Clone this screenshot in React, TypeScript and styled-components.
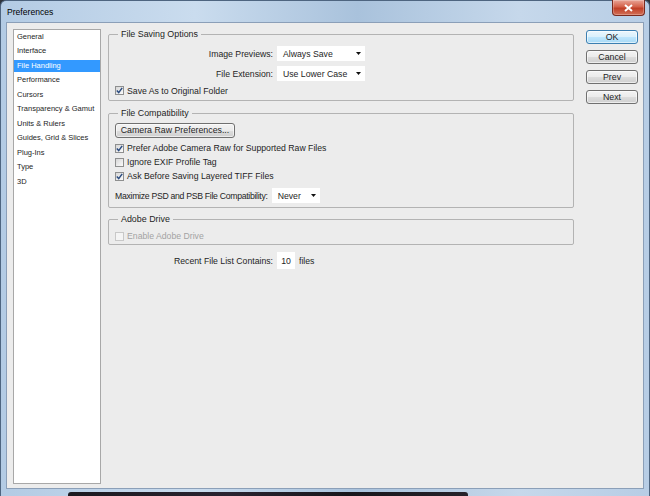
import React from "react";
import styled, { createGlobalStyle, css } from "styled-components";

const UI_FONT = `"Liberation Sans", Arial, sans-serif`;

const GlobalStyle = createGlobalStyle`
  * { box-sizing: border-box; }
  html, body { margin: 0; padding: 0; background: #2f343b; }
  body {
    font-family: ${UI_FONT};
    font-size: 8.7px;
    color: #1e1e1e;
  }
  #root { width: 650px; height: 496px; overflow: hidden; }
`;

const categories = [
  "General",
  "Interface",
  "File Handling",
  "Performance",
  "Cursors",
  "Transparency & Gamut",
  "Units & Rulers",
  "Guides, Grid & Slices",
  "Plug-Ins",
  "Type",
  "3D",
];

const Window = styled.div`
  width: 650px;
  height: 496px;
  display: flex;
  flex-direction: column;
  border: 1px solid #4e6580;
  border-bottom: none;
  border-radius: 6px 6px 0 0;
  background: linear-gradient(
    90deg,
    #b3cbe4 0%,
    #cadcee 30%,
    #a9c2dc 55%,
    #c6d8eb 80%,
    #b7cde5 100%
  );
`;

const TitleBar = styled.div`
  height: 21px;
  flex-shrink: 0;
  display: flex;
  align-items: flex-start;
  justify-content: space-between;
  padding-left: 6px;
`;

const Title = styled.span`
  align-self: center;
  font-size: 8.6px;
  color: #000;
`;

const CloseButton = styled.div`
  width: 33px;
  height: 16px;
  margin-top: -1px;
  margin-right: 4px;
  display: flex;
  align-items: center;
  justify-content: center;
  border: 1px solid #7a2a1e;
  border-top: none;
  border-radius: 0 0 4px 4px;
  background: linear-gradient(#e9a597 0%, #d4614a 45%, #c03f27 55%, #d27057 100%);
  box-shadow: inset 0 0 0 1px rgba(255, 255, 255, 0.25);
`;

const Client = styled.div`
  flex: 1;
  display: flex;
  margin: 0 5px 3px 5px;
  padding: 6px 5px 4px 6px;
  border: 1px solid #8b9fb8;
  background: #ececec;
`;

const BottomShade = styled.div`
  height: 4px;
  width: 400px;
  margin-left: 67px;
  flex-shrink: 0;
  border-radius: 3px 3px 0 0;
  background: linear-gradient(90deg, #1c1a20, #2a2330 40%, #18161b 70%, #26222a);
`;

const CategoryList = styled.ul`
  width: 88px;
  margin: 0;
  padding: 0.5px 0 0;
  list-style: none;
  background: #fff;
  border: 1px solid #a8a8a8;
`;

const CategoryItem = styled.li<{ $selected?: boolean }>`
  height: 12.5px;
  line-height: 12.5px;
  margin-bottom: 2px;
  padding-left: 3px;
  font-size: 7.5px;
  white-space: nowrap;
  color: #1e1e1e;
  ${(p) =>
    p.$selected &&
    css`
      background: #3399ff;
      color: #fff;
    `}
`;

const Main = styled.div`
  flex: 1;
  margin-left: 7px;
  display: flex;
  flex-direction: column;
`;

const Group = styled.fieldset<{ $top?: number; $pt?: number; $pb?: number }>`
  margin: ${(p) => p.$top ?? 0}px 0 0;
  padding: ${(p) => p.$pt ?? 4}px 6px ${(p) => p.$pb ?? 4}px;
  min-inline-size: auto;
  border: 1px solid #b3b3b3;
  border-radius: 2px;
  display: flex;
  flex-direction: column;
`;

const Legend = styled.legend`
  margin-left: 3px;
  padding: 0 3px;
  line-height: 11px;
  font-size: 8.9px;
  color: #1e1e1e;
`;

const FieldRow = styled.div<{ $top?: number; $height?: number }>`
  display: flex;
  align-items: center;
  height: ${(p) => p.$height ?? 15}px;
  margin-top: ${(p) => p.$top ?? 0}px;
  white-space: nowrap;
`;

const FieldLabel = styled.span<{ $width?: number; $tight?: boolean }>`
  width: ${(p) => (p.$width ? `${p.$width}px` : "auto")};
  text-align: right;
  margin-right: 4px;
  letter-spacing: ${(p) => (p.$tight ? "-0.3px" : "normal")};
`;

const SelectBox = styled.div<{ $width: number }>`
  width: ${(p) => p.$width}px;
  height: 15px;
  display: flex;
  align-items: center;
  justify-content: space-between;
  padding: 0 4px 0 6px;
  background: #fff;
  color: #1e1e1e;
`;

const CheckRow = styled.label<{ $top?: number; $height?: number; $disabled?: boolean }>`
  display: flex;
  align-items: center;
  height: ${(p) => p.$height ?? 14}px;
  margin-top: ${(p) => p.$top ?? 0}px;
  white-space: nowrap;
  color: ${(p) => (p.$disabled ? "#a3a3a3" : "#1e1e1e")};
`;

const CheckBox = styled.span<{ $disabled?: boolean }>`
  width: 9px;
  height: 9px;
  margin-right: 3px;
  flex-shrink: 0;
  display: flex;
  align-items: center;
  justify-content: center;
  border: 1px solid ${(p) => (p.$disabled ? "#c8c8c8" : "#8e8f8f")};
  background: ${(p) =>
    p.$disabled ? "#f4f4f4" : "linear-gradient(135deg, #d6d6d6, #fbfbfb)"};
`;

const PushButton = styled.button<{ $default?: boolean; $width?: number; $height?: number }>`
  width: ${(p) => (p.$width ? `${p.$width}px` : "100%")};
  height: ${(p) => p.$height ?? 14}px;
  padding: 0;
  font-family: ${UI_FONT};
  font-size: 8.8px;
  line-height: 1;
  white-space: nowrap;
  color: #1e1e1e;
  border: 1px solid #707070;
  border-radius: 3px;
  background: linear-gradient(#f3f3f3 0%, #ebebeb 50%, #dddddd 51%, #cfcfcf 100%);
  box-shadow: inset 0 0 0 1px rgba(255, 255, 255, 0.6);
  ${(p) =>
    p.$default &&
    css`
      border-color: #3c7fb1;
      background: linear-gradient(#eaf6fd 0%, #d9f0fc 50%, #bee6fd 51%, #a7d9f5 100%);
    `}
`;

const NumberField = styled.div`
  width: 18px;
  height: 17px;
  display: flex;
  align-items: center;
  justify-content: center;
  background: #fff;
  margin-right: 4px;
`;

const ButtonColumn = styled.div`
  width: 52px;
  margin-left: 12px;
  padding-top: 1px;
  display: flex;
  flex-direction: column;
  gap: 6px;
`;

function DropArrow() {
  return (
    <svg width="5" height="3" viewBox="0 0 5 3">
      <path d="M0 0h5L2.5 3z" fill="#111" />
    </svg>
  );
}

function Select({ value, width }: { value: string; width: number }) {
  return (
    <SelectBox $width={width}>
      <span>{value}</span>
      <DropArrow />
    </SelectBox>
  );
}

function Check({
  label,
  checked,
  disabled,
  top,
  height,
}: {
  label: string;
  checked?: boolean;
  disabled?: boolean;
  top?: number;
  height?: number;
}) {
  return (
    <CheckRow $top={top} $height={height} $disabled={disabled}>
      <CheckBox $disabled={disabled}>
        {checked && (
          <svg width="7" height="7" viewBox="0 0 7 7">
            <path
              d="M0.8 3.6 L2.7 5.6 L6.2 0.9"
              fill="none"
              stroke="#2c4c80"
              strokeWidth="1.5"
            />
          </svg>
        )}
      </CheckBox>
      {label}
    </CheckRow>
  );
}

export default function App() {
  return (
    <>
      <GlobalStyle />
      <Window>
        <TitleBar>
          <Title>Preferences</Title>
          <CloseButton>
            <svg width="9" height="8" viewBox="0 0 9 8">
              <path d="M1 1 L8 7 M8 1 L1 7" stroke="#fff" strokeWidth="2" />
            </svg>
          </CloseButton>
        </TitleBar>
        <Client>
          <CategoryList>
            {categories.map((c) => (
              <CategoryItem key={c} $selected={c === "File Handling"}>
                {c}
              </CategoryItem>
            ))}
          </CategoryList>

          <Main>
            <Group $pt={6} $pb={3}>
              <Legend>File Saving Options</Legend>
              <FieldRow>
                <FieldLabel $width={158}>Image Previews:</FieldLabel>
                <Select value="Always Save" width={88} />
              </FieldRow>
              <FieldRow $top={5}>
                <FieldLabel $width={158}>File Extension:</FieldLabel>
                <Select value="Use Lower Case" width={88} />
              </FieldRow>
              <Check label="Save As to Original Folder" checked top={3} height={13} />
            </Group>

            <Group $top={7} $pt={4} $pb={4}>
              <Legend>File Compatibility</Legend>
              <PushButton $width={120} $height={15}>
                Camera Raw Preferences...
              </PushButton>
              <Check
                label="Prefer Adobe Camera Raw for Supported Raw Files"
                checked
                top={3}
              />
              <Check label="Ignore EXIF Profile Tag" />
              <Check label="Ask Before Saving Layered TIFF Files" checked />
              <FieldRow $top={5}>
                <FieldLabel $tight>Maximize PSD and PSB File Compatibility:</FieldLabel>
                <Select value="Never" width={48} />
              </FieldRow>
            </Group>

            <Group $top={6} $pt={4} $pb={1}>
              <Legend>Adobe Drive</Legend>
              <Check label="Enable Adobe Drive" disabled />
            </Group>

            <FieldRow $top={7} $height={17}>
              <FieldLabel $width={165}>Recent File List Contains:</FieldLabel>
              <NumberField>10</NumberField>
              <span>files</span>
            </FieldRow>
          </Main>

          <ButtonColumn>
            <PushButton $default>OK</PushButton>
            <PushButton>Cancel</PushButton>
            <PushButton>Prev</PushButton>
            <PushButton>Next</PushButton>
          </ButtonColumn>
        </Client>
        <BottomShade />
      </Window>
    </>
  );
}
